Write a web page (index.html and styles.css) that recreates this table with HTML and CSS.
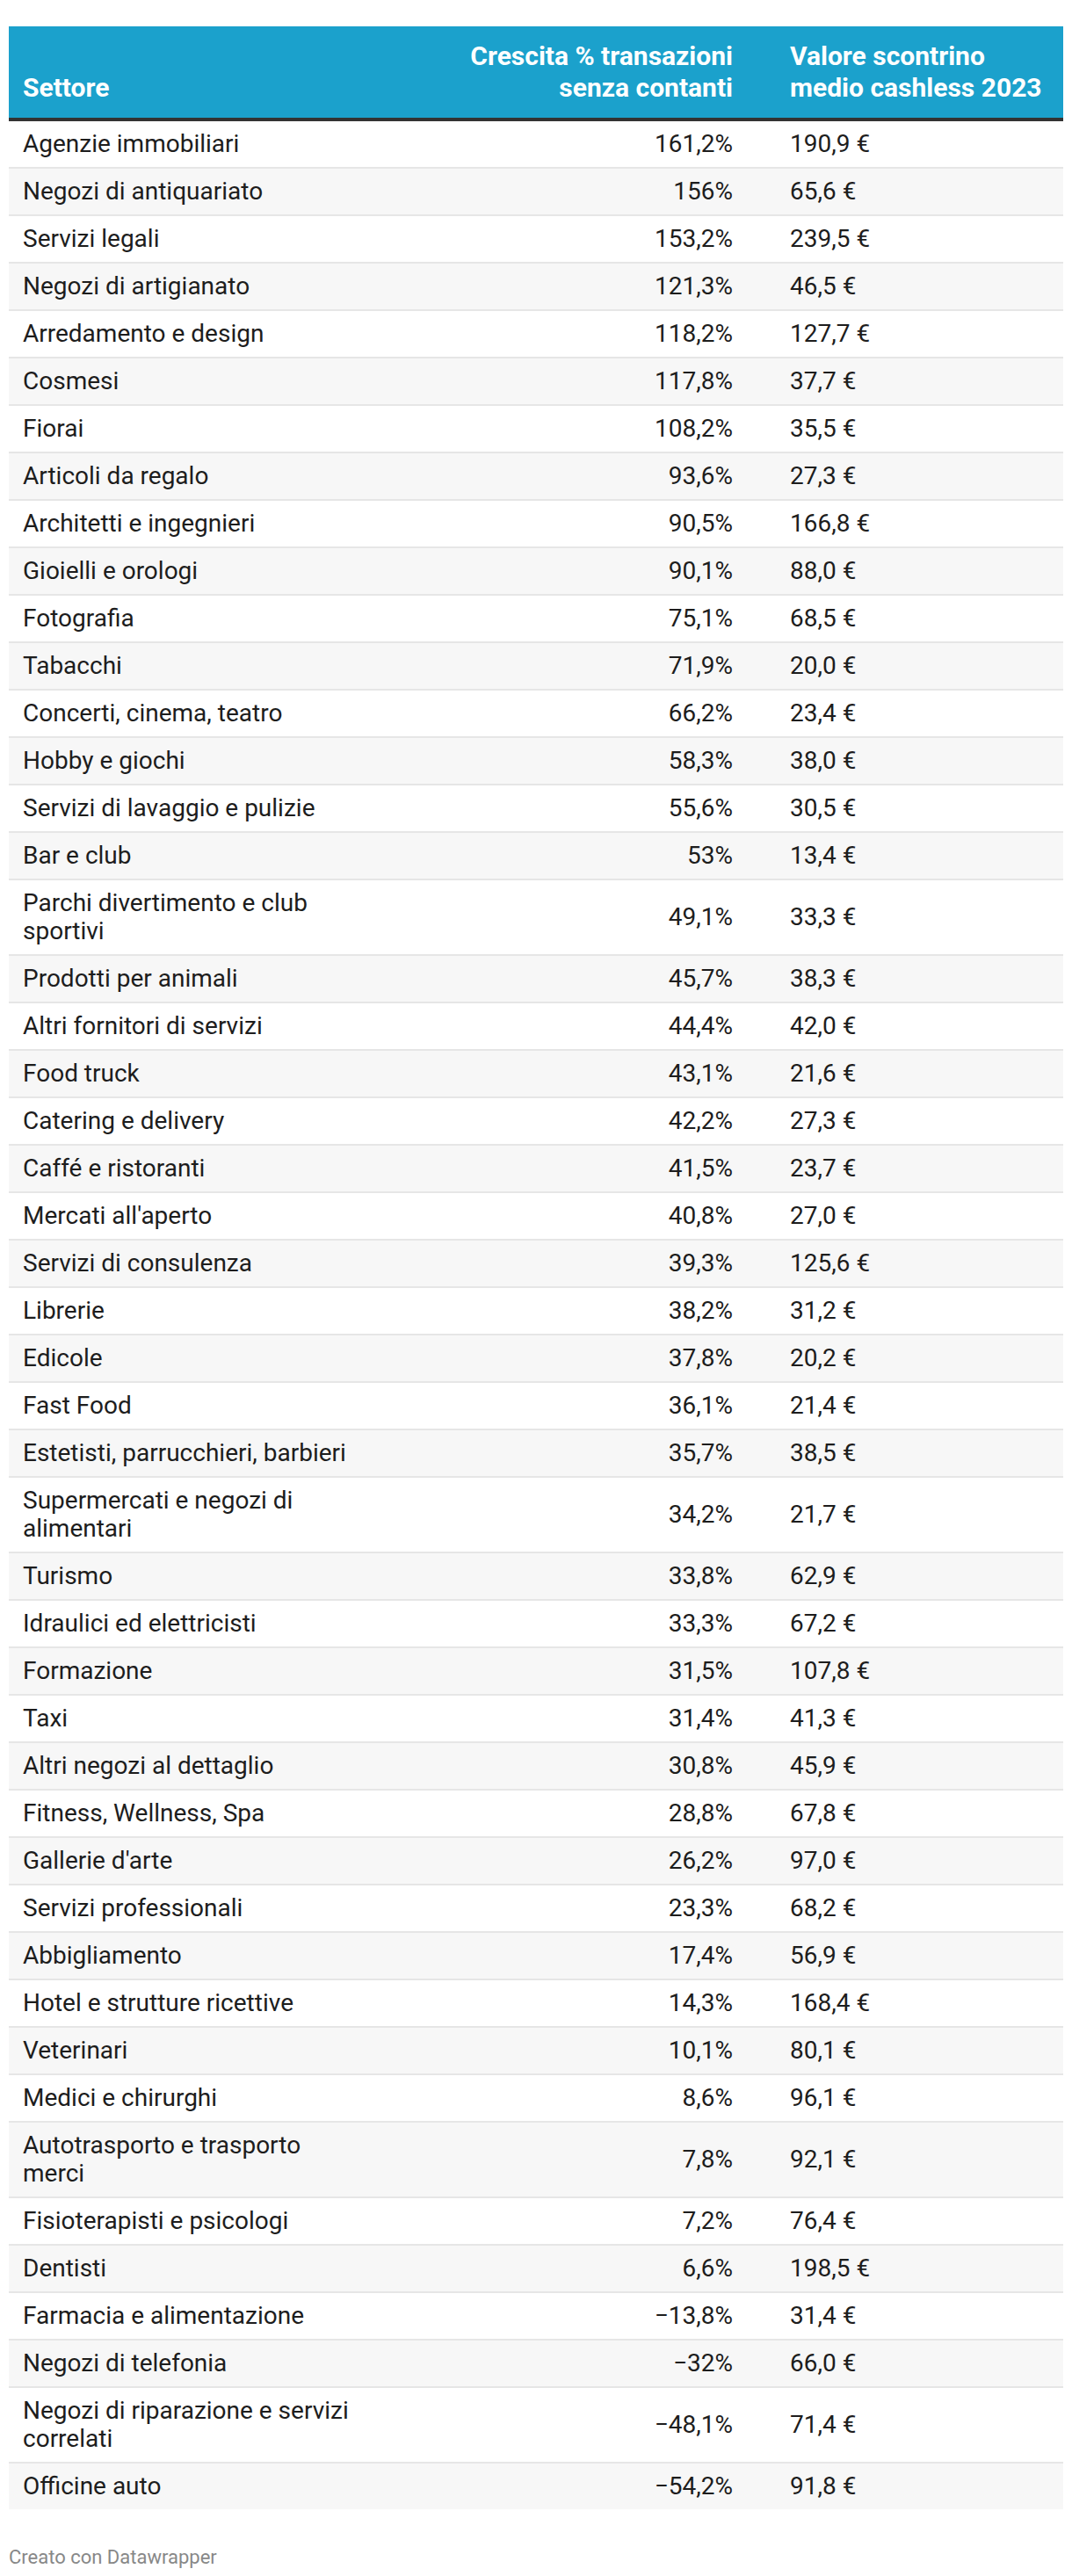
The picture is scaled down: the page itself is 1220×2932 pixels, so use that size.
FILE: index.html
```html
<!DOCTYPE html>
<html lang="it">
<head>
<meta charset="utf-8">
<title>Crescita transazioni senza contanti</title>
<link rel="stylesheet" href="styles.css">
</head>
<body>
<div class="chart">
<table class="dw-table">
<colgroup>
<col class="c-name">
<col class="c-growth">
<col class="c-value">
</colgroup>
<thead>
<tr>
<th class="h-name">Settore</th>
<th class="h-growth">Crescita % transazioni<br>senza contanti</th>
<th class="h-value">Valore scontrino<br>medio cashless 2023</th>
</tr>
</thead>
<tbody>
<tr><td class="name">Agenzie immobiliari</td><td class="num">161,2%</td><td class="val">190,9&nbsp;€</td></tr>
<tr><td class="name">Negozi di antiquariato</td><td class="num">156%</td><td class="val">65,6&nbsp;€</td></tr>
<tr><td class="name">Servizi legali</td><td class="num">153,2%</td><td class="val">239,5&nbsp;€</td></tr>
<tr><td class="name">Negozi di artigianato</td><td class="num">121,3%</td><td class="val">46,5&nbsp;€</td></tr>
<tr><td class="name">Arredamento e design</td><td class="num">118,2%</td><td class="val">127,7&nbsp;€</td></tr>
<tr><td class="name">Cosmesi</td><td class="num">117,8%</td><td class="val">37,7&nbsp;€</td></tr>
<tr><td class="name">Fiorai</td><td class="num">108,2%</td><td class="val">35,5&nbsp;€</td></tr>
<tr><td class="name">Articoli da regalo</td><td class="num">93,6%</td><td class="val">27,3&nbsp;€</td></tr>
<tr><td class="name">Architetti e ingegnieri</td><td class="num">90,5%</td><td class="val">166,8&nbsp;€</td></tr>
<tr><td class="name">Gioielli e orologi</td><td class="num">90,1%</td><td class="val">88,0&nbsp;€</td></tr>
<tr><td class="name">Fotografia</td><td class="num">75,1%</td><td class="val">68,5&nbsp;€</td></tr>
<tr><td class="name">Tabacchi</td><td class="num">71,9%</td><td class="val">20,0&nbsp;€</td></tr>
<tr><td class="name">Concerti, cinema, teatro</td><td class="num">66,2%</td><td class="val">23,4&nbsp;€</td></tr>
<tr><td class="name">Hobby e giochi</td><td class="num">58,3%</td><td class="val">38,0&nbsp;€</td></tr>
<tr><td class="name">Servizi di lavaggio e pulizie</td><td class="num">55,6%</td><td class="val">30,5&nbsp;€</td></tr>
<tr><td class="name">Bar e club</td><td class="num">53%</td><td class="val">13,4&nbsp;€</td></tr>
<tr><td class="name">Parchi divertimento e club sportivi</td><td class="num">49,1%</td><td class="val">33,3&nbsp;€</td></tr>
<tr><td class="name">Prodotti per animali</td><td class="num">45,7%</td><td class="val">38,3&nbsp;€</td></tr>
<tr><td class="name">Altri fornitori di servizi</td><td class="num">44,4%</td><td class="val">42,0&nbsp;€</td></tr>
<tr><td class="name">Food truck</td><td class="num">43,1%</td><td class="val">21,6&nbsp;€</td></tr>
<tr><td class="name">Catering e delivery</td><td class="num">42,2%</td><td class="val">27,3&nbsp;€</td></tr>
<tr><td class="name">Caffé e ristoranti</td><td class="num">41,5%</td><td class="val">23,7&nbsp;€</td></tr>
<tr><td class="name">Mercati all'aperto</td><td class="num">40,8%</td><td class="val">27,0&nbsp;€</td></tr>
<tr><td class="name">Servizi di consulenza</td><td class="num">39,3%</td><td class="val">125,6&nbsp;€</td></tr>
<tr><td class="name">Librerie</td><td class="num">38,2%</td><td class="val">31,2&nbsp;€</td></tr>
<tr><td class="name">Edicole</td><td class="num">37,8%</td><td class="val">20,2&nbsp;€</td></tr>
<tr><td class="name">Fast Food</td><td class="num">36,1%</td><td class="val">21,4&nbsp;€</td></tr>
<tr><td class="name">Estetisti, parrucchieri, barbieri</td><td class="num">35,7%</td><td class="val">38,5&nbsp;€</td></tr>
<tr><td class="name">Supermercati e negozi di alimentari</td><td class="num">34,2%</td><td class="val">21,7&nbsp;€</td></tr>
<tr><td class="name">Turismo</td><td class="num">33,8%</td><td class="val">62,9&nbsp;€</td></tr>
<tr><td class="name">Idraulici ed elettricisti</td><td class="num">33,3%</td><td class="val">67,2&nbsp;€</td></tr>
<tr><td class="name">Formazione</td><td class="num">31,5%</td><td class="val">107,8&nbsp;€</td></tr>
<tr><td class="name">Taxi</td><td class="num">31,4%</td><td class="val">41,3&nbsp;€</td></tr>
<tr><td class="name">Altri negozi al dettaglio</td><td class="num">30,8%</td><td class="val">45,9&nbsp;€</td></tr>
<tr><td class="name">Fitness, Wellness, Spa</td><td class="num">28,8%</td><td class="val">67,8&nbsp;€</td></tr>
<tr><td class="name">Gallerie d'arte</td><td class="num">26,2%</td><td class="val">97,0&nbsp;€</td></tr>
<tr><td class="name">Servizi professionali</td><td class="num">23,3%</td><td class="val">68,2&nbsp;€</td></tr>
<tr><td class="name">Abbigliamento</td><td class="num">17,4%</td><td class="val">56,9&nbsp;€</td></tr>
<tr><td class="name">Hotel e strutture ricettive</td><td class="num">14,3%</td><td class="val">168,4&nbsp;€</td></tr>
<tr><td class="name">Veterinari</td><td class="num">10,1%</td><td class="val">80,1&nbsp;€</td></tr>
<tr><td class="name">Medici e chirurghi</td><td class="num">8,6%</td><td class="val">96,1&nbsp;€</td></tr>
<tr><td class="name">Autotrasporto e trasporto merci</td><td class="num">7,8%</td><td class="val">92,1&nbsp;€</td></tr>
<tr><td class="name">Fisioterapisti e psicologi</td><td class="num">7,2%</td><td class="val">76,4&nbsp;€</td></tr>
<tr><td class="name">Dentisti</td><td class="num">6,6%</td><td class="val">198,5&nbsp;€</td></tr>
<tr><td class="name">Farmacia e alimentazione</td><td class="num">−13,8%</td><td class="val">31,4&nbsp;€</td></tr>
<tr><td class="name">Negozi di telefonia</td><td class="num">−32%</td><td class="val">66,0&nbsp;€</td></tr>
<tr><td class="name">Negozi di riparazione e servizi correlati</td><td class="num">−48,1%</td><td class="val">71,4&nbsp;€</td></tr>
<tr><td class="name">Officine auto</td><td class="num">−54,2%</td><td class="val">91,8&nbsp;€</td></tr>
</tbody>
</table>
<p class="footer">Creato con Datawrapper</p>
</div>
</body>
</html>
```
FILE: styles.css
```css
html, body {
  margin: 0;
  padding: 0;
  background: #ffffff;
}

body {
  font-family: Roboto, "Liberation Sans", Arial, sans-serif;
  color: #1d1d1d;
}

.chart {
  padding: 30px 10px 0 10px;
}

.dw-table {
  width: 1200px;
  table-layout: fixed;
  border-collapse: separate;
  border-spacing: 0;
  font-size: 28px;
  line-height: 32px;
}

.c-name { width: 468px; }
.c-growth { width: 372px; }
.c-value { width: 360px; }

.dw-table thead th {
  background: #1ba1cc;
  color: #ffffff;
  font-size: 30px;
  font-weight: 700;
  line-height: 36px;
  padding: 16px 16px 16px 16px;
  vertical-align: bottom;
  border-bottom: 4px solid #333333;
  white-space: nowrap;
}

.h-name { text-align: left; }
.h-growth { text-align: right; }
.dw-table thead .h-value { text-align: left; padding-left: 49px; padding-right: 10px; }

.dw-table td {
  padding: 10px 16px;
  vertical-align: middle;
  font-variant-numeric: tabular-nums;
}

.dw-table tbody tr + tr td {
  border-top: 2px solid #e6e6e6;
}

.dw-table tbody tr:nth-child(even) td {
  background: #f7f7f7;
}

.dw-table td.name {
  text-align: left;
  padding-right: 72px;
}

.dw-table td.num {
  text-align: right;
}

.dw-table td.val {
  text-align: left;
  padding-left: 49px;
}

.footer {
  margin: 42px 0 0 0;
  font-size: 22px;
  line-height: 26px;
  color: #888888;
}
```
